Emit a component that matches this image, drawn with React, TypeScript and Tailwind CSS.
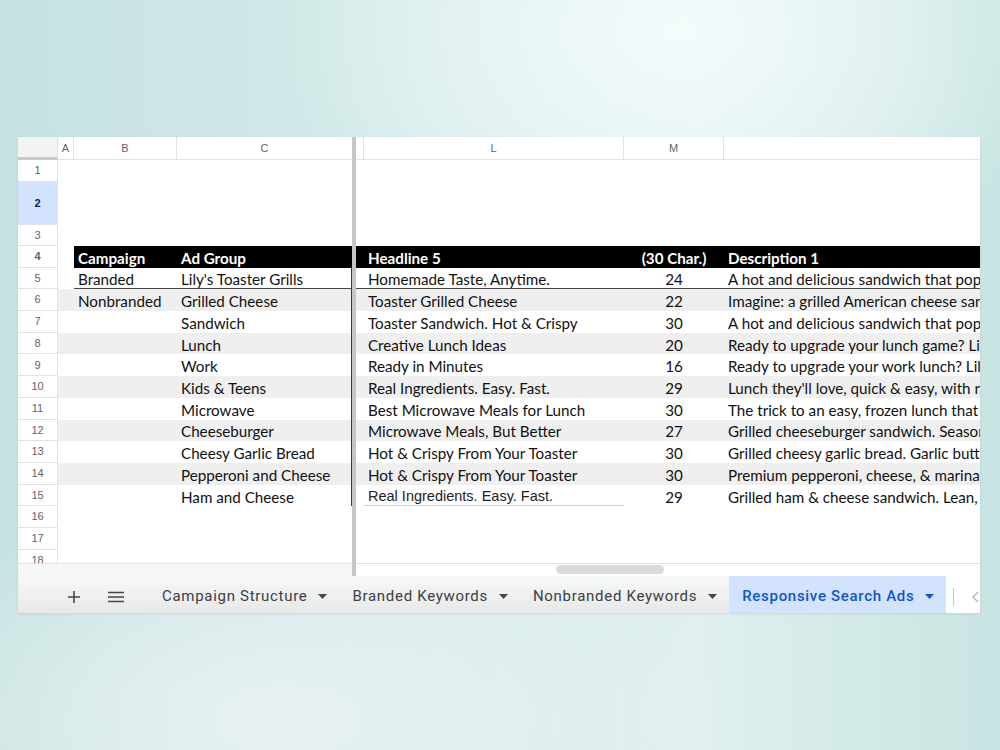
import clsx from "clsx";

const cn = clsx;

const rows = [
  { n: 5, b: "Branded", c: "Lily's Toaster Grills", l: "Homemade Taste, Anytime.", m: "24", d: "A hot and delicious sandwich that pops out of your toaster in minutes." },
  { n: 6, b: "Nonbranded", c: "Grilled Cheese", l: "Toaster Grilled Cheese", m: "22", d: "Imagine: a grilled American cheese sandwich, ready in minutes." },
  { n: 7, b: "", c: "Sandwich", l: "Toaster Sandwich. Hot & Crispy", m: "30", d: "A hot and delicious sandwich that pops out of your toaster." },
  { n: 8, b: "", c: "Lunch", l: "Creative Lunch Ideas", m: "20", d: "Ready to upgrade your lunch game? Lily's has you covered." },
  { n: 9, b: "", c: "Work", l: "Ready in Minutes", m: "16", d: "Ready to upgrade your work lunch? Lily's has you covered." },
  { n: 10, b: "", c: "Kids & Teens", l: "Real Ingredients. Easy. Fast.", m: "29", d: "Lunch they'll love, quick & easy, with real ingredients." },
  { n: 11, b: "", c: "Microwave", l: "Best Microwave Meals for Lunch", m: "30", d: "The trick to an easy, frozen lunch that tastes homemade." },
  { n: 12, b: "", c: "Cheeseburger", l: "Microwave Meals, But Better", m: "27", d: "Grilled cheeseburger sandwich. Seasoned beef & cheese." },
  { n: 13, b: "", c: "Cheesy Garlic Bread", l: "Hot & Crispy From Your Toaster", m: "30", d: "Grilled cheesy garlic bread. Garlic butter & mozzarella." },
  { n: 14, b: "", c: "Pepperoni and Cheese", l: "Hot & Crispy From Your Toaster", m: "30", d: "Premium pepperoni, cheese, & marinara sauce." },
  { n: 15, b: "", c: "Ham and Cheese", l: "Real Ingredients. Easy. Fast.", m: "29", d: "Grilled ham & cheese sandwich. Lean, smoked ham." },
];

const numFont = "font-['Liberation_Sans',Arial,sans-serif]";
const cellFont = "font-['Lato',sans-serif] text-[15.2px] text-[#111]";

function RowNum({ n, active }: { n: number; active?: boolean }) {
  return (
    <div
      className={cn(
        "w-[40px] shrink-0 h-full flex items-center justify-center border-r border-b border-[#e1e3e1] text-[11px]",
        numFont,
        active ? "bg-[#d3e3fd] text-[#041e49] font-bold" : "bg-white text-[#5f6368]"
      )}
    >
      {n}
    </div>
  );
}

function Freeze() {
  return <div className="w-[4px] shrink-0 h-full bg-[#c6c6c6]" />;
}

function EmptyRow({ n, h, active }: { n: number; h: string; active?: boolean }) {
  return (
    <div className={cn("flex shrink-0", h)}>
      <RowNum n={n} active={active} />
      <div className="w-[294px] shrink-0" />
      <Freeze />
      <div className="flex-1" />
    </div>
  );
}

function Caret({ active }: { active?: boolean }) {
  return (
    <svg width="9" height="5" viewBox="0 0 9 5" className={active ? "fill-[#0b57d0]" : "fill-[#444746]"}>
      <path d="M0 0h9L4.5 5z" />
    </svg>
  );
}

function Tab({ label, active }: { label: string; active?: boolean }) {
  return (
    <div
      className={cn(
        "h-full flex items-center gap-[11px] pt-[4px] pl-[13px] pr-[12px] text-[15px] tracking-[0.7px] whitespace-nowrap font-['Roboto',sans-serif]",
        active ? "bg-[#d3e3fd] text-[#0b57d0] font-medium" : "text-[#3c4043] font-normal"
      )}
    >
      <span>{label}</span>
      <Caret active={active} />
    </div>
  );
}

export default function App() {
  return (
    <div className="w-[1000px] h-[750px] overflow-hidden pt-[137px] pl-[18px] bg-[#cde6e5] bg-[image:radial-gradient(ellipse_40%_35%_at_68%_4%,#f3fbfb_0%,rgba(243,251,251,0)_100%),radial-gradient(ellipse_45%_30%_at_28%_96%,#e9f2f2_0%,rgba(233,242,242,0)_100%),linear-gradient(90deg,#c5e2e1_0%,#d6eceb_45%,#dff0ef_70%,#c8e4e2_100%)]">
      <div className="w-[962px] h-[476px] bg-white flex flex-col overflow-hidden shadow-[0_1px_3px_rgba(0,0,0,0.08)]">
        {/* column headers */}
        <div className={cn("flex h-[23px] shrink-0 text-[11px] text-[#5f6368]", numFont)}>
          <div className="w-[40px] shrink-0 bg-[#f3f3f3] border-r border-[#e1e3e1] border-b-[3px] border-b-[#c9c9c9]" />
          <div className="w-[16px] shrink-0 flex items-center justify-center border-r border-b border-[#e1e3e1]">A</div>
          <div className="w-[103px] shrink-0 flex items-center justify-center border-r border-b border-[#e1e3e1]">B</div>
          <div className="w-[175px] shrink-0 flex items-center justify-center border-b border-[#e1e3e1]">C</div>
          <Freeze />
          <div className="w-[8px] shrink-0 border-r border-b border-[#e1e3e1]" />
          <div className="w-[260px] shrink-0 flex items-center justify-center border-r border-b border-[#e1e3e1]">L</div>
          <div className="w-[100px] shrink-0 flex items-center justify-center border-r border-b border-[#e1e3e1]">M</div>
          <div className="flex-1 border-b border-[#e1e3e1]" />
        </div>

        {/* grid body */}
        <div className="h-[403px] shrink-0 overflow-hidden flex flex-col">
          <EmptyRow n={1} h="h-[22px]" />
          <EmptyRow n={2} h="h-[43px]" active />
          <EmptyRow n={3} h="h-[21px]" />

          {/* row 4: header */}
          <div className={cn("flex h-[21.7px] shrink-0 font-bold text-white", cellFont)}>
            <RowNum n={4} />
            <div className="w-[16px] shrink-0" />
            <div className="w-[103px] shrink-0 bg-black flex items-center pt-[3px] pl-[4px] text-white">Campaign</div>
            <div className="w-[175px] shrink-0 bg-black flex items-center pt-[3px] pl-[4px] text-white">Ad Group</div>
            <Freeze />
            <div className="w-[8px] shrink-0 bg-black" />
            <div className="w-[260px] shrink-0 bg-black flex items-center pt-[3px] pl-[4px] text-white">Headline 5</div>
            <div className="w-[100px] shrink-0 bg-black flex items-center justify-center pt-[3px] text-white">(30 Char.)</div>
            <div className="flex-1 bg-black flex items-center pt-[3px] pl-[4px] text-white whitespace-nowrap overflow-hidden">Description 1</div>
          </div>

          {rows.map((r, i) => {
            const band = i % 2 === 1;
            const first = i === 0;
            const last = i === rows.length - 1;
            return (
              <div key={r.n} className={cn("flex h-[21.7px] shrink-0", cellFont)}>
                <RowNum n={r.n} />
                <div className={cn("w-[16px] shrink-0", band && "bg-[#efefef]")} />
                <div className={cn("w-[103px] shrink-0 flex items-center pt-[3px] pl-[4px] whitespace-nowrap", band && "bg-[#efefef]", first && "border-b border-[#444]")}>
                  {r.b}
                </div>
                <div className={cn("w-[175px] shrink-0 flex items-center pt-[3px] pl-[4px] whitespace-nowrap border-r border-r-[#3a3a3a]", band && "bg-[#efefef]", first && "border-b border-b-[#444]")}>
                  {r.c}
                </div>
                <Freeze />
                <div className={cn("w-[8px] shrink-0", band && "bg-[#efefef]", first && "border-b border-[#444]")} />
                <div
                  className={cn(
                    "w-[260px] shrink-0 flex items-center pt-[3px] pl-[4px] whitespace-nowrap",
                    band && "bg-[#efefef]",
                    first && "border-b border-[#444]",
                    last && "border-b border-[#d0d0d0] font-['Liberation_Sans',Arial,sans-serif] text-[14.5px] text-[#222]"
                  )}
                >
                  {r.l}
                </div>
                <div className={cn("w-[100px] shrink-0 flex items-center justify-center pt-[3px]", band && "bg-[#efefef]", first && "border-b border-[#444]")}>
                  {r.m}
                </div>
                <div className={cn("flex-1 flex items-center pt-[3px] pl-[4px] whitespace-nowrap overflow-hidden", band && "bg-[#efefef]", first && "border-b border-[#444]")}>
                  {r.d}
                </div>
              </div>
            );
          })}

          <EmptyRow n={16} h="h-[21.7px]" />
          <EmptyRow n={17} h="h-[21.7px]" />
          <EmptyRow n={18} h="h-[21.7px]" />
        </div>

        {/* horizontal scrollbar */}
        <div className="flex h-[13px] shrink-0">
          <div className="w-[334px] shrink-0 bg-[#f6f7f7] border-t border-[#e1e3e1]" />
          <Freeze />
          <div className="flex-1 bg-white border-t border-[#e1e3e1]">
            <div className="ml-[200px] mt-[1px] w-[108px] h-[9px] rounded-full bg-[#d9dadc]" />
          </div>
        </div>

        {/* sheet tabs */}
        <div className="flex h-[37px] shrink-0 bg-gradient-to-b from-[#f7f8f8] to-[#e7e8e8]">
          <div className="flex items-center pt-[4px] pl-[46px] h-full">
            <svg width="20" height="20" viewBox="0 0 20 20" className="stroke-[#444746]" strokeWidth="1.6" fill="none">
              <path d="M10 4v12M4 10h12" />
            </svg>
            <svg width="20" height="20" viewBox="0 0 20 20" className="ml-[22px] stroke-[#444746]" strokeWidth="1.5" fill="none">
              <path d="M2 5.5h16M2 10h16M2 14.5h16" />
            </svg>
          </div>
          <div className="ml-[23px] flex h-full">
            <Tab label="Campaign Structure" />
            <Tab label="Branded Keywords" />
            <Tab label="Nonbranded Keywords" />
            <Tab label="Responsive Search Ads" active />
          </div>
          <div className="flex-1 bg-white flex items-center pt-[4px] h-full overflow-hidden">
            <div className="ml-[7px] w-px h-[18px] shrink-0 bg-[#c4c7c5]" />
            <svg width="10" height="14" viewBox="0 0 10 14" className="ml-[17px] shrink-0 stroke-[#b8bbbd]" strokeWidth="1.6" fill="none">
              <path d="M7 2L2 7l5 5" />
            </svg>
          </div>
        </div>
      </div>
    </div>
  );
}
